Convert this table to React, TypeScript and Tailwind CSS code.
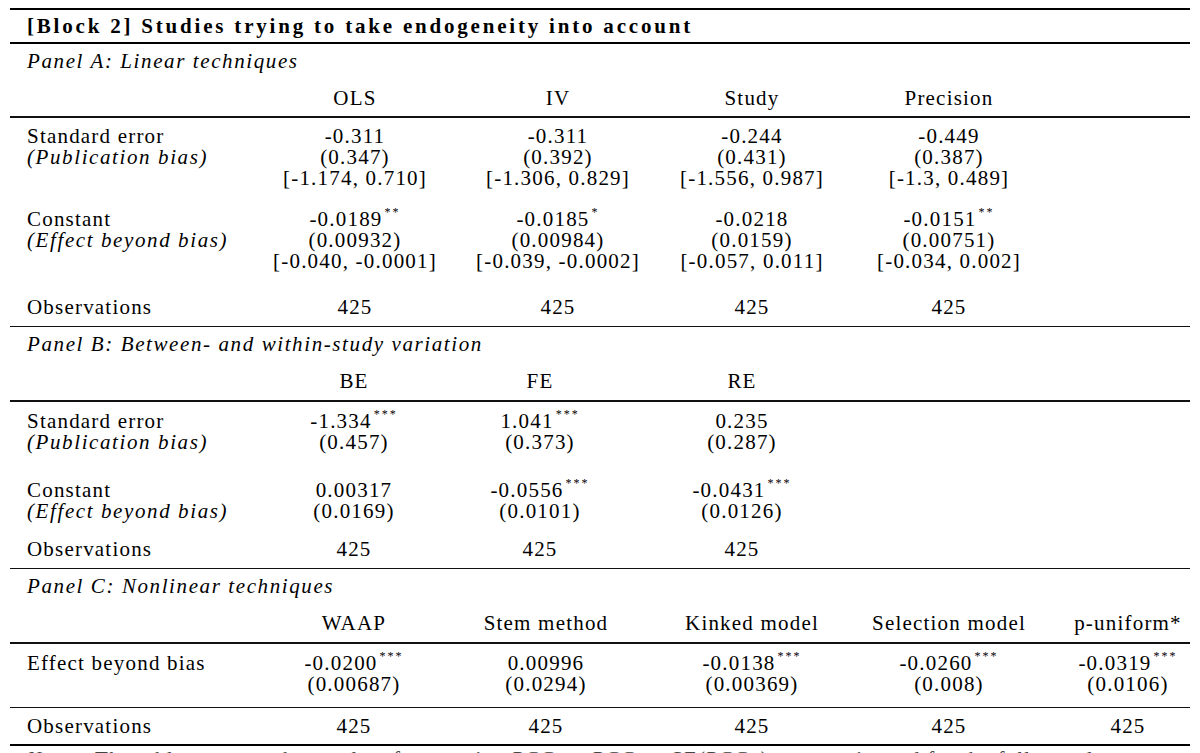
import React from "react";

type Cell = { v: string; s?: string };
type Line = string | Cell;

const FONT = { fontFamily: '"Liberation Serif", "Times New Roman", serif' } as const;

function Val({ l }: { l: Line }) {
  if (typeof l === "string") return <span>{l}</span>;
  return (
    <span>
      {l.v}
      {l.s ? (
        <span className="relative top-[-10px] text-[12px] ml-[2px] tracking-[2px]">{l.s}</span>
      ) : null}
    </span>
  );
}

function Group({
  label,
  cols,
  widths,
  lastPad,
}: {
  label: { t: string; i?: boolean }[];
  cols: Line[][];
  widths: string[];
  lastPad?: string;
}) {
  return (
    <div className="flex">
      <div className="w-[245px] pl-[17px] flex flex-col">
        {label.map((l, k) => (
          <div key={k} className={"h-[21px] leading-[21px] whitespace-nowrap" + (l.i ? " italic tracking-[1.6px]" : "")}>
            {l.t}
          </div>
        ))}
      </div>
      {cols.map((c, ci) => (
        <div
          key={ci}
          className={widths[ci] + " flex flex-col items-center" + (ci === cols.length - 1 && lastPad ? " " + lastPad : "")}
        >
          {c.map((l, k) => (
            <div key={k} className="h-[21px] leading-[21px] whitespace-nowrap">
              <Val l={l} />
            </div>
          ))}
        </div>
      ))}
    </div>
  );
}

const WA = ["w-[200px]", "w-[206px]", "w-[182px]", "w-[212px]"];
const WB = ["w-[198px]", "w-[174px]", "w-[230px]"];
const WC = ["w-[198px]", "w-[186px]", "w-[226px]", "w-[168px]", "w-[157px]"];

function Thin() {
  return <div className="h-[1.5px] bg-[#111]" />;
}
function Thick() {
  return <div className="h-[2px] bg-black" />;
}

function PanelLabel({ t }: { t: string }) {
  return <div className="pl-[17px] h-[21px] leading-[21px] italic tracking-[1.6px]">{t}</div>;
}

export default function App() {
  return (
    <div className="w-[1200px] h-[753px] overflow-hidden bg-white text-black text-[21px] tracking-[1.2px]" style={FONT}>
      <div className="mx-[10px] pt-[8px]">
        <Thick />
        <div className="pt-[6px] pb-[5px] pl-[17px] h-[32px] leading-[21px] font-bold tracking-[2.8px] whitespace-nowrap">
          [Block 2] Studies trying to take endogeneity into account
        </div>
        <Thick />

        {/* Panel A */}
        <div className="pt-[7px]">
          <PanelLabel t="Panel A: Linear techniques" />
        </div>
        <div className="pt-[16px] pb-[7px]">
          <Group label={[{ t: "" }]} cols={[["OLS"], ["IV"], ["Study"], ["Precision"]]} widths={WA} />
        </div>
        <Thin />
        <div className="pt-[8px]">
          <Group
            label={[{ t: "Standard error" }, { t: "(Publication bias)", i: true }, { t: "" }]}
            cols={[
              ["-0.311", "(0.347)", "[-1.174, 0.710]"],
              ["-0.311", "(0.392)", "[-1.306, 0.829]"],
              ["-0.244", "(0.431)", "[-1.556, 0.987]"],
              ["-0.449", "(0.387)", "[-1.3, 0.489]"],
            ]}
            widths={WA}
          />
        </div>
        <div className="pt-[20px]">
          <Group
            label={[{ t: "Constant" }, { t: "(Effect beyond bias)", i: true }, { t: "" }]}
            cols={[
              [{ v: "-0.0189", s: "**" }, "(0.00932)", "[-0.040, -0.0001]"],
              [{ v: "-0.0185", s: "*" }, "(0.00984)", "[-0.039, -0.0002]"],
              ["-0.0218", "(0.0159)", "[-0.057, 0.011]"],
              [{ v: "-0.0151", s: "**" }, "(0.00751)", "[-0.034, 0.002]"],
            ]}
            widths={WA}
          />
        </div>
        <div className="pt-[25px] pb-[8px]">
          <Group label={[{ t: "Observations" }]} cols={[["425"], ["425"], ["425"], ["425"]]} widths={WA} />
        </div>
        <Thin />

        {/* Panel B */}
        <div className="pt-[7px]">
          <PanelLabel t="Panel B: Between- and within-study variation" />
        </div>
        <div className="pt-[16px] pb-[8px]">
          <Group label={[{ t: "" }]} cols={[["BE"], ["FE"], ["RE"]]} widths={WB} />
        </div>
        <Thin />
        <div className="pt-[9px]">
          <Group
            label={[{ t: "Standard error" }, { t: "(Publication bias)", i: true }]}
            cols={[
              [{ v: "-1.334", s: "***" }, "(0.457)"],
              [{ v: "1.041", s: "***" }, "(0.373)"],
              ["0.235", "(0.287)"],
            ]}
            widths={WB}
          />
        </div>
        <div className="pt-[27px]">
          <Group
            label={[{ t: "Constant" }, { t: "(Effect beyond bias)", i: true }]}
            cols={[
              ["0.00317", "(0.0169)"],
              [{ v: "-0.0556", s: "***" }, "(0.0101)"],
              [{ v: "-0.0431", s: "***" }, "(0.0126)"],
            ]}
            widths={WB}
          />
        </div>
        <div className="pt-[17px] pb-[8px]">
          <Group label={[{ t: "Observations" }]} cols={[["425"], ["425"], ["425"]]} widths={WB} />
        </div>
        <Thin />

        {/* Panel C */}
        <div className="pt-[7px]">
          <PanelLabel t="Panel C: Nonlinear techniques" />
        </div>
        <div className="pt-[16px] pb-[8px]">
          <Group
            label={[{ t: "" }]}
            cols={[["WAAP"], ["Stem method"], ["Kinked model"], ["Selection model"], ["p-uniform*"]]}
            widths={WC}
            lastPad="pl-[33px]"
          />
        </div>
        <Thin />
        <div className="pt-[9px] pb-[12px]">
          <Group
            label={[{ t: "Effect beyond bias" }, { t: "" }]}
            cols={[
              [{ v: "-0.0200", s: "***" }, "(0.00687)"],
              ["0.00996", "(0.0294)"],
              [{ v: "-0.0138", s: "***" }, "(0.00369)"],
              [{ v: "-0.0260", s: "***" }, "(0.008)"],
              [{ v: "-0.0319", s: "***" }, "(0.0106)"],
            ]}
            widths={WC}
            lastPad="pl-[33px]"
          />
        </div>
        <Thin />
        <div className="pt-[8px] pb-[7px]">
          <Group
            label={[{ t: "Observations" }]}
            cols={[["425"], ["425"], ["425"], ["425"], ["425"]]}
            widths={WC}
            lastPad="pl-[33px]"
          />
        </div>
        <Thick />
        <div className="mt-[3px] pl-[17px] h-[21px] leading-[21px] whitespace-nowrap text-[#444]">
          <span className="italic">Notes:</span> The table presents the results of regression PCC<sub>ij</sub> = PCC<sub>0</sub> + SE(PCC<sub>ij</sub>) + e<sub>ij</sub>, estimated for the full sample
        </div>
      </div>
    </div>
  );
}
